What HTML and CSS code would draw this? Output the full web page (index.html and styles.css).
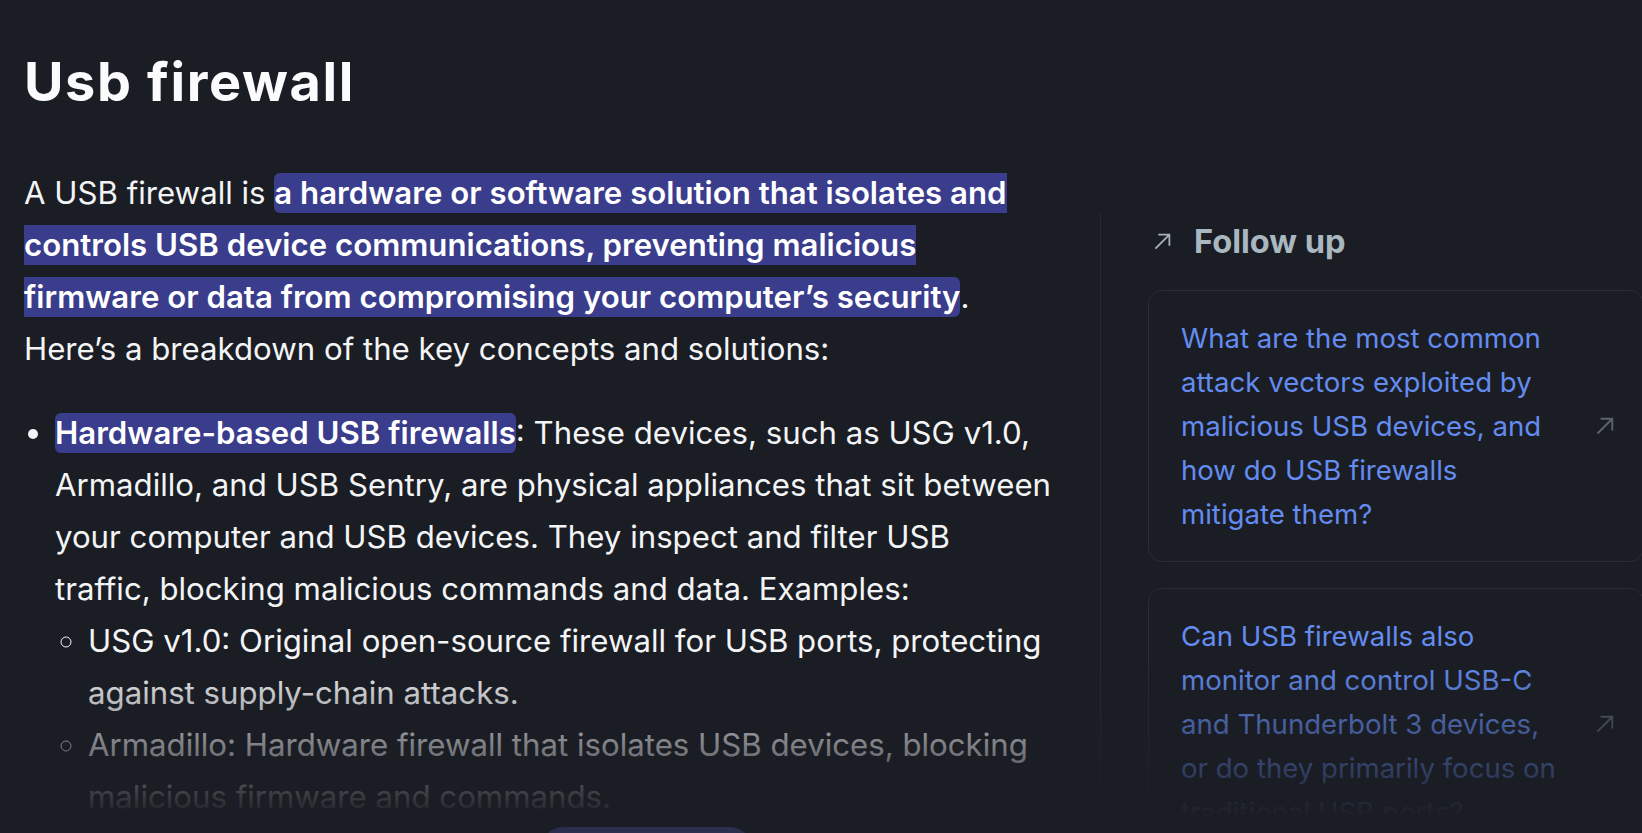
FILE: index.html
```html
<!DOCTYPE html>
<html lang="en">
<head>
<meta charset="utf-8">
<title>Usb firewall</title>
<link rel="stylesheet" href="styles.css">
</head>
<body>
<div class="viewport">
  <div class="layout">
    <article class="answer">
      <h1 class="title">Usb firewall</h1>
      <p class="para">A USB firewall is <mark class="hl">a hardware or software solution that isolates and controls USB device communications, preventing malicious firmware or data from compromising your computer’s security</mark>. Here’s a breakdown of the key concepts and solutions:</p>
      <ul class="list">
        <li><mark class="hl">Hardware-based USB firewalls</mark>: These devices, such as USG v1.0, Armadillo, and USB Sentry, are physical appliances that sit between your computer and USB devices. They inspect and filter USB traffic, blocking malicious commands and data. Examples:
          <ul class="sublist">
            <li>USG v1.0: Original open-source firewall for USB ports, protecting against supply-chain attacks.</li>
            <li>Armadillo: Hardware firewall that isolates USB devices, blocking malicious firmware and commands.</li>
          </ul>
        </li>
      </ul>
    </article>
    <aside class="followup">
      <h2 class="fu-title">
        <svg class="fu-icon" viewBox="0 0 16 16" width="19" height="19" aria-hidden="true"><path d="M2 14 13.8 2.2M4.5 2.2h9.3v9.3" fill="none" stroke="currentColor" stroke-width="1.5"/></svg>
        <span>Follow up</span>
      </h2>
      <div class="fu-card">
        <span class="fu-text">What are the most common attack vectors exploited by malicious USB devices, and how do USB firewalls mitigate them?</span>
        <svg class="fu-arrow" viewBox="0 0 16 16" width="20" height="20" aria-hidden="true"><path d="M2 14 13.8 2.2M4.5 2.2h9.3v9.3" fill="none" stroke="currentColor" stroke-width="1.5"/></svg>
      </div>
      <div class="fu-card">
        <span class="fu-text">Can USB firewalls also monitor and control USB-C and Thunderbolt 3 devices, or do they primarily focus on traditional USB ports?</span>
        <svg class="fu-arrow" viewBox="0 0 16 16" width="20" height="20" aria-hidden="true"><path d="M2 14 13.8 2.2M4.5 2.2h9.3v9.3" fill="none" stroke="currentColor" stroke-width="1.5"/></svg>
      </div>
    </aside>
  </div>
  <div class="fade"></div>
  <button class="pill" type="button"></button>
</div>
</body>
</html>
```

FILE: styles.css
```css
* { box-sizing: border-box; }

html, body {
  margin: 0;
  padding: 0;
  background: #1b1d24;
  overflow: hidden;
}

body {
  font-family: Inter, "Noto Sans", sans-serif;
  color: #f3f4f6;
}

.viewport {
  position: relative;
  width: 1642px;
  height: 833px;
  overflow: hidden;
}

.layout {
  display: flex;
  align-items: flex-start;
  padding-left: 24px;
  height: 815px;
  overflow: hidden;
}

.answer {
  flex: 0 0 1027px;
  width: 1027px;
}

.title {
  margin: 50px 0 0;
  font-size: 54px;
  line-height: 64px;
  font-weight: 700;
  color: #fbfbfd;
  letter-spacing: 1.6px;
}

.para {
  margin: 53px 0 0;
  font-size: 31.2px;
  line-height: 52px;
}

.hl {
  background: #3a3c8c;
  color: #ffffff;
  font-weight: 600;
  border-radius: 6px;
  padding: 1px 0;
}

.list {
  margin: 32px -2px 0 0;
  padding-left: 31px;
  font-size: 31.2px;
  line-height: 52px;
  list-style: disc;
}

.sublist {
  margin: 0;
  padding-left: 33px;
  list-style: circle;
}

.followup {
  flex: 0 0 auto;
  margin-left: 49px;
  margin-top: 214px;
  padding: 8px 0 0 47px;
  border-left: 1px solid #282a31;
  height: 600px;
  display: flex;
  flex-direction: column;
  gap: 26px;
}

.fu-title {
  display: flex;
  align-items: center;
  gap: 22px;
  margin: 0 0 4px;
  padding-left: 5px;
  font-size: 32.6px;
  line-height: 38px;
  font-weight: 700;
  color: #a9b7c0;
}

.fu-icon {
  color: #a9b3bb;
  flex: 0 0 auto;
  margin-top: 1px;
}

.fu-card {
  display: flex;
  align-items: center;
  width: 496px;
  padding: 25px 32px;
  border: 1px solid #2a2d34;
  border-radius: 14px;
  background: #1b1d24;
  flex: 0 0 auto;
}

.fu-text {
  flex: 0 0 378px;
  font-size: 27.6px;
  line-height: 44px;
  color: #648cf0;
}

.fu-arrow {
  margin-left: auto;
  margin-right: -4px;
  color: #5a646c;
  flex: 0 0 auto;
}

.fade {
  position: absolute;
  left: 0;
  right: 0;
  top: 660px;
  bottom: 0;
  background: linear-gradient(to bottom, rgba(27, 29, 36, 0) 0px, #1b1d24 158px);
  pointer-events: none;
}

.pill {
  position: absolute;
  left: 541px;
  top: 827px;
  width: 211px;
  height: 44px;
  border: 0;
  border-radius: 22px;
  background: #2b2e4c;
}
```
